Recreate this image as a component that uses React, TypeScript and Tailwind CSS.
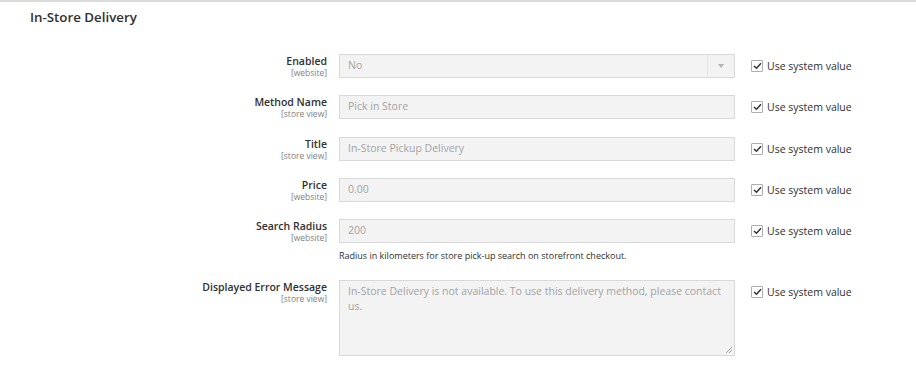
import React from "react";

type Field = {
  label: string;
  scope: string;
  value: string;
  kind?: "select" | "input" | "textarea";
  note?: string;
};

const fields: Field[] = [
  { label: "Enabled", scope: "[website]", value: "No", kind: "select" },
  { label: "Method Name", scope: "[store view]", value: "Pick in Store" },
  { label: "Title", scope: "[store view]", value: "In-Store Pickup Delivery" },
  { label: "Price", scope: "[website]", value: "0.00" },
  {
    label: "Search Radius",
    scope: "[website]",
    value: "200",
    note: "Radius in kilometers for store pick-up search on storefront checkout.",
  },
  {
    label: "Displayed Error Message",
    scope: "[store view]",
    value:
      "In-Store Delivery is not available. To use this delivery method, please contact us.",
    kind: "textarea",
  },
];

const CheckIcon = () => (
  <span className="flex h-[12px] w-[12px] items-center justify-center rounded-[1px] border border-[#adadad] bg-white">
    <svg width="9" height="8" viewBox="0 0 9 8" fill="none">
      <path d="M1 4 L3.5 6.3 L8 1.3" stroke="#333" strokeWidth="1.5" />
    </svg>
  </span>
);

const Row = ({ field }: { field: Field }) => {
  const box =
    "w-[396px] border border-[#d9d9d9] bg-[#f3f3f3] text-[10.5px] text-[#a3a3a3]";
  return (
    <div className="flex items-start">
      <div className="h-[24px] w-[327px] shrink-0 pt-[1px] text-right">
        <div className="text-[10.5px] font-semibold leading-[13px] text-[#303030]">
          {field.label}
        </div>
        <div className="text-[8.5px] leading-[10px] text-[#808080]">
          {field.scope}
        </div>
      </div>
      <div className="ml-[12px] shrink-0">
        {field.kind === "select" ? (
          <div className={`${box} flex h-[24px] items-center`}>
            <span className="flex-1 pl-[8px]">{field.value}</span>
            <span className="flex h-full w-[27px] items-center justify-center border-l border-[#e3e3e3]">
              <span className="h-0 w-0 border-x-[3px] border-t-[4px] border-x-transparent border-t-[#b3b3b3]" />
            </span>
          </div>
        ) : field.kind === "textarea" ? (
          <div className={`${box} relative h-[76px] px-[8px] pt-[3px] leading-[15px]`}>
            {field.value}
            <svg
              className="absolute bottom-[1px] right-[1px]"
              width="8"
              height="8"
              viewBox="0 0 8 8"
            >
              <path d="M7 1 L1 7 M7 4 L4 7" stroke="#a0a0a0" strokeWidth="1" />
            </svg>
          </div>
        ) : (
          <div className={`${box} flex h-[24px] items-center pl-[8px]`}>
            {field.value}
          </div>
        )}
        {field.note && (
          <div className="mt-[6px] text-[9px] leading-[14px] text-[#303030]">
            {field.note}
          </div>
        )}
      </div>
      <div className="ml-[16px] flex items-center gap-[4px] pt-[6px] text-[10.5px] leading-[12px] text-[#303030]">
        <CheckIcon />
        <span>Use system value</span>
      </div>
    </div>
  );
};

export default function App() {
  return (
    <div
      className="h-[367px] w-[916px] overflow-hidden border-t-2 border-[#dcdcdc] bg-white"
      style={{ fontFamily: '"Open Sans", sans-serif' }}
    >
      <h2 className="pl-[30px] pt-[5px] text-[13.3px] font-semibold leading-[20px] text-[#303030]">
        In-Store Delivery
      </h2>
      <div className="mt-[27px] flex flex-col gap-[17.3px]">
        {fields.map((f) => (
          <Row key={f.label} field={f} />
        ))}
      </div>
    </div>
  );
}
